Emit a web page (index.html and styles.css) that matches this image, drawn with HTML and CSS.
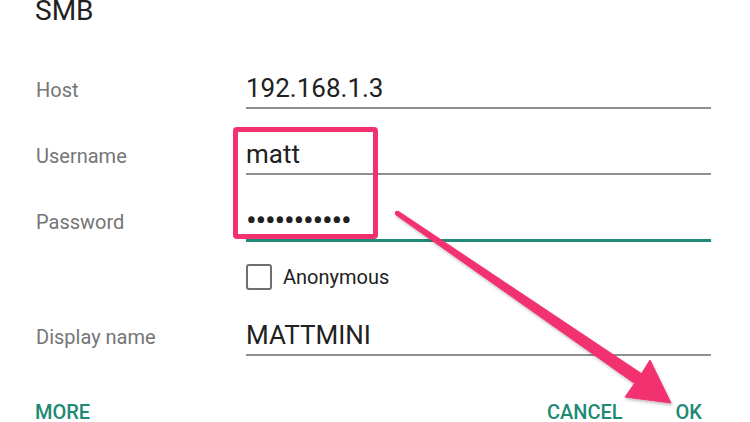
FILE: index.html
```html
<!DOCTYPE html>
<html lang="en">
<head>
    <meta charset="UTF-8">
    <meta content="width=device-width, initial-scale=1.0" name="viewport">
    <title>SMB</title>
    <link rel="stylesheet" href="styles.css">
</head>
<body>
<div class="dialog">
    <h1 class="dialog-title">SMB</h1>

    <div class="form">
        <div class="field-label">Host</div>
        <div class="field">192.168.1.3</div>

        <div class="field-label">Username</div>
        <div class="field">matt</div>

        <div class="field-label">Password</div>
        <div class="field focused"><span class="dots">•••••••••••</span></div>

        <div class="spacer"></div>
        <label class="check-row">
            <span class="checkbox"></span>
            <span class="check-text">Anonymous</span>
        </label>

        <div class="field-label">Display name</div>
        <div class="field">MATTMINI</div>
    </div>

    <div class="actions">
        <div class="text-button">MORE</div>
        <div class="actions-right">
            <div class="text-button">CANCEL</div>
            <div class="text-button">OK</div>
        </div>
    </div>
</div>

<!-- annotations drawn over the screenshot -->
<div class="highlight-box"></div>
<svg class="arrow" width="750" height="422" viewBox="0 0 750 422">
    <defs>
        <filter id="shadow" x="-10%" y="-10%" width="120%" height="120%">
            <feDropShadow dx="1" dy="2" stdDeviation="1.5" flood-color="#000" flood-opacity="0.25"/>
        </filter>
    </defs>
    <g filter="url(#shadow)" fill="#f2326f">
        <circle cx="397" cy="213" r="2.2"/>
        <polygon points="398.2,211.2 641.5,373.6 650,360 671,403 625,397 634.5,383.4 395.8,214.8"
                 stroke="#f2326f" stroke-width="1" stroke-linejoin="round"/>
    </g>
</svg>
</body>
</html>
```

FILE: styles.css
```css
* {
    box-sizing: border-box;
    margin: 0;
    padding: 0;
}

body {
    font-family: Roboto, "Noto Sans", sans-serif;
    background-color: #fff;
    position: relative;
}

.dialog {
    padding: 0 39px 0 36px;
}

.dialog-title {
    font-size: 28px;
    font-weight: 400;
    line-height: 26px;
    color: #212121;
    margin-top: -2px;
    margin-left: -1px;
}

.form {
    display: grid;
    grid-template-columns: 210px 1fr;
    align-items: baseline;
    row-gap: 30px;
    margin-top: 49px;
}

.field-label {
    font-size: 20px;
    color: #757575;
}

.field {
    font-size: 26px;
    line-height: 30px;
    color: #212121;
    padding-bottom: 4px;
    border-bottom: 2px solid #8f8f8f;
}

.field.focused {
    border-bottom: 3px solid #1f8a78;
}

.dots {
    font-size: 32px;
    line-height: 30px;
    letter-spacing: -1.3px;
    vertical-align: top;
}

.spacer {
    height: 1px;
}

.check-row {
    display: flex;
    align-items: center;
    gap: 11px;
    margin-top: -8px;
}

.checkbox {
    width: 26px;
    height: 26px;
    border: 2.5px solid #6f6f6f;
    border-radius: 3px;
}

.check-text {
    font-size: 20px;
    color: #212121;
}

.actions {
    display: flex;
    justify-content: space-between;
    margin-top: 47px;
    margin-left: -1px;
    margin-right: 9px;
}

.actions-right {
    display: flex;
    gap: 53px;
}

.text-button {
    font-size: 20px;
    font-weight: 500;
    line-height: 18px;
    color: #1d8a74;
}

.highlight-box {
    position: absolute;
    left: 233px;
    top: 127px;
    width: 145px;
    height: 112px;
    border: 5px solid #f2326f;
    border-radius: 4px;
}

.arrow {
    position: absolute;
    left: 0;
    top: 0;
    pointer-events: none;
}
```
